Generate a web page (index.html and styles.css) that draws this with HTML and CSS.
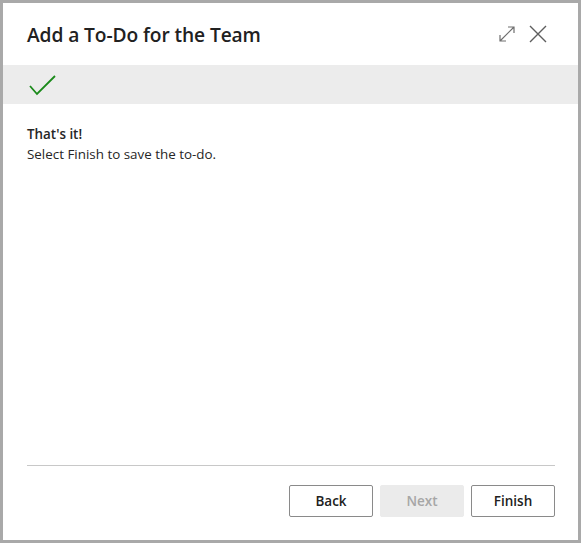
FILE: index.html
```html
<!DOCTYPE html>
<html>
<head>
<meta charset="utf-8">
<link rel="stylesheet" href="styles.css">
</head>
<body>
<div class="dialog">
  <div class="header">
    <h1 class="title">Add a To-Do for the Team</h1>
    <div class="actions">
      <svg class="icon" width="18" height="18" viewBox="0 0 18 18">
        <path d="M2 16 L16 2 M10 2 H16 V8 M2 10 V16 H8" fill="none" stroke="#6e6e6e" stroke-width="1.2"/>
      </svg>
      <svg class="icon" width="18" height="18" viewBox="0 0 18 18">
        <path d="M1 1 L17 17 M17 1 L1 17" fill="none" stroke="#5e5e5e" stroke-width="1.4"/>
      </svg>
    </div>
  </div>
  <div class="band">
    <svg width="28" height="22" viewBox="0 0 28 22">
      <path d="M1 11 L8 19 L26 1" fill="none" stroke="#1a8a1a" stroke-width="1.8"/>
    </svg>
  </div>
  <div class="content">
    <div class="strong">That's it!</div>
    <div>Select Finish to save the to-do.</div>
  </div>
  <div class="footer">
    <div class="buttons">
      <button class="btn">Back</button>
      <button class="btn disabled">Next</button>
      <button class="btn">Finish</button>
    </div>
  </div>
</div>
</body>
</html>
```

FILE: styles.css
```css
* { box-sizing: border-box; }
html, body { margin: 0; height: 543px; }
body {
  padding: 3px;
  background: #a9a9a9;
  font-family: "Open Sans", "Noto Sans", sans-serif;
  color: #212121;
}
.dialog {
  background: #fff;
  height: 537px;
  display: flex;
  flex-direction: column;
}
.header {
  height: 62px;
  display: flex;
  align-items: center;
  justify-content: space-between;
  padding: 0 31px 0 24px;
}
.title {
  margin: 0;
  font-size: 19.2px;
  font-weight: 600;
  letter-spacing: -0.1px;
  color: #212121;
}
.actions {
  display: flex;
  gap: 13px;
  align-items: center;
}
.icon { display: block; }
.band {
  height: 39px;
  background: #ececec;
  display: flex;
  align-items: center;
  padding-left: 26px;
}
.band svg { display: block; margin-top: 2px; }
.content {
  flex: 1;
  padding: 20px 24px 0;
  font-size: 13.4px;
  line-height: 20px;
  color: #262626;
}
.strong { font-weight: 600; }
.footer {
  margin: 0 23px 0 24px;
  border-top: 1px solid #c8c8c8;
  padding: 19px 0 23px;
}
.buttons {
  display: flex;
  justify-content: flex-end;
  gap: 7px;
}
.btn {
  width: 84px;
  height: 32px;
  border: 1px solid #8a8a8a;
  border-radius: 2px;
  background: #fff;
  font-family: "Open Sans", "Noto Sans", sans-serif;
  font-size: 13.5px;
  font-weight: 600;
  color: #212121;
  padding: 0;
}
.btn.disabled {
  background: #ebebeb;
  border-color: #ebebeb;
  color: #a6a6a6;
}
```
